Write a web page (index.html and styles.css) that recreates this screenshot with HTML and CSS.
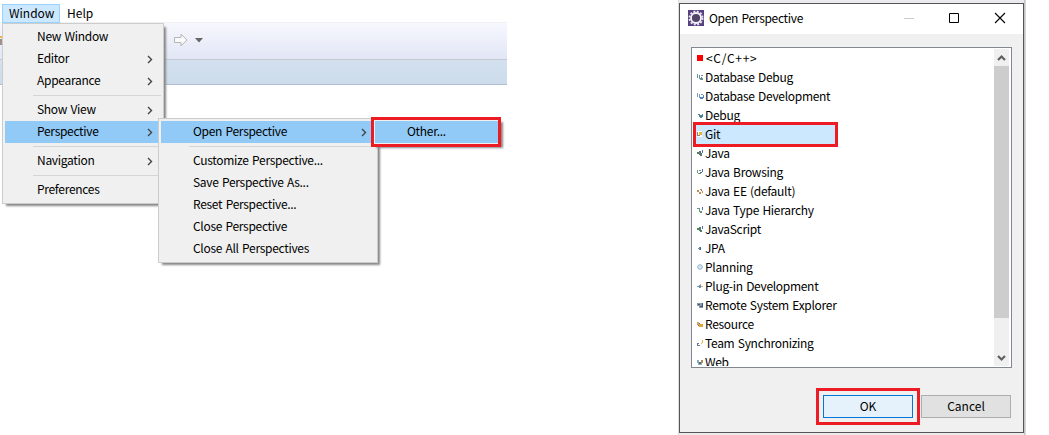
FILE: index.html
```html
<!DOCTYPE html>
<html lang="en">
<head>
<meta charset="utf-8">
<title>Open Perspective</title>
<link rel="stylesheet" href="styles.css">
</head>
<body>
<main class="desktop">
  <section class="ide">
    <nav class="menubar"><span class="menubar-item active">Window</span><span class="menubar-item">Help</span></nav>
    <div class="toolbar">
      <svg class="tool-edge" width="3" height="12" viewBox="0 0 3 12"><path d="M0 1h2v2H0z" fill="#f0b050"/><path d="M0 4h2v6H0z" fill="#a09088"/></svg>
      <svg class="forward" width="32" height="14" viewBox="0 0 32 14"><path d="M1.500 4.500H8V1.200L14 7 8 12.800V9.500H1.500z" fill="#fafafa" stroke="#b4b4b4"/><path d="M22 5h8l-4 4.500z" fill="#666"/></svg>
    </div>
    <div class="tabstrip"></div>
  </section>

  <div class="menu menu-window">
    <div class="item">New Window</div>
    <div class="item">Editor<svg class="chev" viewBox="0 0 6 9"><path d="M1 1l3.500 3.500L1 8"/></svg></div>
    <div class="item">Appearance<svg class="chev" viewBox="0 0 6 9"><path d="M1 1l3.500 3.500L1 8"/></svg></div>
    <hr>
    <div class="item">Show View<svg class="chev" viewBox="0 0 6 9"><path d="M1 1l3.500 3.500L1 8"/></svg></div>
    <div class="item selected">Perspective<svg class="chev" viewBox="0 0 6 9"><path d="M1 1l3.500 3.500L1 8"/></svg></div>
    <hr>
    <div class="item">Navigation<svg class="chev" viewBox="0 0 6 9"><path d="M1 1l3.500 3.500L1 8"/></svg></div>
    <hr>
    <div class="item">Preferences</div>
  </div>
  <div class="menu menu-perspective">
    <div class="item selected">Open Perspective<svg class="chev" viewBox="0 0 6 9"><path d="M1 1l3.500 3.500L1 8"/></svg></div>
    <hr>
    <div class="item">Customize Perspective...</div>
    <div class="item">Save Perspective As...</div>
    <div class="item">Reset Perspective...</div>
    <div class="item">Close Perspective</div>
    <div class="item">Close All Perspectives</div>
  </div>
  <div class="menu menu-other"><div class="item selected">Other...</div></div>

  <div class="backdrop"></div>
  <section class="dialog">
    <header class="titlebar">
      <svg class="logo" width="16" height="16" viewBox="0 0 16 16"><path fill="#56407f" d="M0 0h16v16H0z"/><circle cx="8" cy="8" r="6.500" fill="none" stroke="#e4e0ec" stroke-width="2" stroke-dasharray="2 1.400"/><circle cx="8" cy="8" r="5" fill="#51456a" stroke="#f4f2f8" stroke-width="1.800"/></svg>
      <h1 class="title">Open Perspective</h1>
      <svg class="controls" width="104" height="12" viewBox="0 0 104 12" fill="none"><path d="M1 6.500h10" stroke="#ccc"/><path d="M46.500 1.500h9v9h-9z" stroke="#000"/><path d="M92 1l10 10M102 1L92 11" stroke="#000" stroke-width="1.100"/></svg>
    </header>
    <div class="list">
      <ul class="rows">
        <li class="row first"><svg class="ico" viewBox="0 0 7 7"><path fill="red" d="M0 0h6v6H0z"/></svg>&lt;C/C++&gt;</li>
        <li class="row"><svg class="ico" viewBox="0 0 7 7"><path fill="#6f91ad" d="M0 0h1v4H0zM2 1h1v4H2zM4 1h2v1H4zM3 4h3v2H3z"/><path fill="#4d9a75" d="M4 3h1v3H4z"/></svg>Database Debug</li>
        <li class="row"><svg class="ico" viewBox="0 0 7 7"><path fill="#7b9dc1" d="M0 0h1v4H0zM2 1h1v4H2zM4 1h2v1H4z"/><path fill="#4a86c8" d="M3 4h3v2H3zM6 2h1v3H6z"/></svg>Database Development</li>
        <li class="row"><svg class="ico" viewBox="0 0 7 7"><path fill="#4b8790" d="M1 2h2v1H1zM2 3h4v2H2zM3 5h2v1H3zM5 2h1v1H5z"/></svg>Debug</li>
        <li class="row picked"><svg class="ico" viewBox="0 0 7 7"><path fill="#fff" d="M0 0h5v6H0z"/><path fill="#a87860" d="M0 1h1v4H0zM1 4h2v1H1z"/><path fill="#edb52f" d="M2 1h3v3H2z"/></svg>Git</li>
        <li class="row"><svg class="ico" viewBox="0 0 7 7"><path fill="#597a62" d="M0 2h2v2H0zM2 1h2v4H2zM3 4h2v2H3z"/><path fill="#536caa" d="M5 0h1v3H5zM4 3h1v1H4z"/></svg>Java</li>
        <li class="row"><svg class="ico" viewBox="0 0 7 7"><path fill="#63987a" d="M0 1h1v3H0zM1 4h3v1H1zM2 1h2v1H2z"/><path fill="#536caa" d="M5 0h1v3H5zM3 3h2v1H3z"/></svg>Java Browsing</li>
        <li class="row"><svg class="ico" viewBox="0 0 7 7"><path fill="#c78c4a" d="M0 2h2v2H0zM3 1h2v1H3zM2 4h2v2H2zM5 3h1v2H5z"/><path fill="#7c6295" d="M4 2h1v1H4z"/></svg>Java EE (default)</li>
        <li class="row"><svg class="ico" viewBox="0 0 7 7"><path fill="#63987a" d="M0 1h3v1H0zM2 2h1v3H2zM3 4h2v2H3z"/><path fill="#536caa" d="M5 0h1v3H5z"/></svg>Java Type Hierarchy</li>
        <li class="row"><svg class="ico" viewBox="0 0 7 7"><path fill="#478363" d="M0 2h2v2H0zM2 1h2v4H2zM3 4h2v2H3z"/><path fill="#536caa" d="M5 0h1v3H5z"/><path fill="#b35e4c" d="M1 2h1v1H1z"/></svg>JavaScript</li>
        <li class="row"><svg class="ico" viewBox="0 0 7 7"><path fill="#6994b5" d="M1 3h1v1H1zM2 2h2v3H2z"/><path fill="#3f6888" d="M3 2h1v3H3z"/></svg>JPA</li>
        <li class="row"><svg class="ico" viewBox="0 0 7 7"><circle cx="3" cy="3" r="2.300" fill="#d6e8f2" stroke="#91b2ca"/></svg>Planning</li>
        <li class="row"><svg class="ico" viewBox="0 0 7 7"><path fill="#6c91bf" d="M0 3h2v1H0zM2 2h2v3H2z"/><path fill="#d6ab55" d="M3 1h1v1H3zM4 3h2v1H4z"/></svg>Plug-in Development</li>
        <li class="row"><svg class="ico" viewBox="0 0 7 7"><path fill="#8a9aab" d="M0 1h6v5H2V4H0z"/><path fill="#405779" d="M1 2h2v1H1zM3 4h2v1H3zM5 1h1v4H5z"/></svg>Remote System Explorer</li>
        <li class="row"><svg class="ico" viewBox="0 0 7 7"><path fill="#c9a477" d="M0 1h2v3H0z"/><path fill="#e5a331" d="M2 3h4v3H2z"/><path fill="#75685c" d="M2 2h1v1H2zM1 4h1v1H1z"/></svg>Resource</li>
        <li class="row"><svg class="ico" viewBox="0 0 7 7"><path fill="#647a9d" d="M0 3h1v3H0zM1 5h2v1H1zM1 3h1v1H1z"/><path fill="#e7b736" d="M5 0h1v3H5zM4 3h1v1H4z"/></svg>Team Synchronizing</li>
        <li class="row"><svg class="ico" viewBox="0 0 7 7"><path fill="#8cabc5" d="M0 1h2v3H0zM1 3h4v3H1z"/><path fill="#b58a4f" d="M4 1h2v3H4z"/><path fill="#45766b" d="M2 3h2v2H2z"/></svg>Web</li>
      </ul>
      <div class="scrollbar">
        <svg class="arrow" viewBox="0 0 15 17"><path d="M4 11l3.500-3.500L11 11" fill="none" stroke="#606060" stroke-width="2.200"/></svg>
        <div class="thumb"></div>
        <svg class="arrow" viewBox="0 0 15 17"><path d="M4 7l3.500 3.500L11 7" fill="none" stroke="#606060" stroke-width="2.200"/></svg>
      </div>
    </div>
    <footer class="buttons"><button class="btn ok">OK</button><button class="btn">Cancel</button></footer>
  </section>
  <div class="mark mark-other"></div>
  <div class="mark mark-git"></div>
  <div class="mark mark-ok"></div>
</main>
</body>
</html>
```
FILE: styles.css
```css
* { box-sizing: border-box; }
body { margin: 0; background: #fff; color: #000; font: 12px/22px "Noto Sans CJK KR", "Open Sans", sans-serif; letter-spacing: -0.3px; word-spacing: 1px; }
.desktop { position: relative; width: 1049px; height: 435px; overflow: hidden; }
.ide { width: 507px; }
.menubar { display: flex; height: 22px; padding: 4px 0 0 2px; }
.menubar-item { height: 19px; padding: 0 6px; line-height: 15px; letter-spacing: 0; border: 1px solid transparent; }
.menubar-item.active { width: 58px; background: #cce8ff; border-color: #99d1ff; }
.toolbar { display: flex; align-items: center; height: 38px; background: linear-gradient(#f7f8fe, #e1e5f5); border-bottom: 1px solid #c6c8d0; border-top: 1px solid #f0f0f0; }
.forward { margin: 0 0 2px 170px; }
.tabstrip { height: 25px; background: linear-gradient(#d2e0ef, #cddceb); border-bottom: 1px solid #b2bdd2; }

.menu { position: absolute; padding: 2px; background: #f0f0f0; border: 1px solid #ccc; box-shadow: 3px 3px 2px -1px #888; }
.menu-window { left: 2px; top: 23px; width: 162px; }
.menu-perspective { left: 158px; top: 118px; width: 220px; }
.menu-other { left: 372px; top: 118px; width: 129px; }
.item { display: flex; justify-content: space-between; height: 22px; padding: 0 8px 0 32px; line-height: 20px; white-space: nowrap; }
.item.selected { background: #91c9f7; }
.menu hr { height: 1px; margin: 3px 0 3px 28px; border: 0; background: #d5d5d5; }
.chev { align-self: center; width: 6px; height: 9px; fill: none; stroke: #444; stroke-width: 1.4; }

.backdrop { position: absolute; left: 678px; top: 0; width: 348px; height: 435px; background: linear-gradient(90deg, #dedee0 0 1px, #ebebed 1px 346px, #c4c4c8 346px 347px, #d8d8dc 347px); }
.dialog { position: absolute; left: 679px; top: 3px; width: 345px; height: 430px; background: #f0f0f0; border: 1px solid #555; }
.titlebar { display: flex; align-items: center; height: 30px; padding: 0 16px 2px 8px; background: #fff; }
.title { margin: 0 auto 0 5px; font-size: 12px; font-weight: 400; }
.list { display: flex; justify-content: space-between; width: 321px; height: 321px; margin: 13px 0 0 11px; padding: 1px 2px 1px 1px; background: #fff; border: 1px solid #828790; }
.rows { flex: 1; height: 317px; margin: 0; padding: 0 0 0 2px; overflow: hidden; list-style: none; }
.row { display: flex; width: 141px; height: 19px; padding-left: 2px; line-height: 17px; white-space: nowrap; }
.row.picked { background: #cce8ff; }
.ico { width: 7px; height: 7px; margin: 6px 1px 0 0; flex: none; }
.first .ico { margin-right: 2px; }
.first { letter-spacing: 0.7px; }
.scrollbar { display: flex; flex-direction: column; width: 15px; height: 317px; background: #f0f0f0; }
.arrow { width: 15px; height: 17px; }
.thumb { height: 252px; margin-bottom: auto; background: #cdcdcd; }
.buttons { display: flex; gap: 8px; justify-content: flex-end; padding: 27px 12px 0 0; }
.btn { width: 90px; height: 23px; padding: 0 0 2px; font: inherit; line-height: 19px; background: #e1e1e1; border: 1px solid #adadad; }
.btn.ok { background: #e5f1fb; border-color: #0078d7; }

.mark { position: absolute; border: 3px solid #ed1c24; }
.mark-other { left: 371px; top: 117px; width: 130px; height: 30px; }
.mark-git { left: 693px; top: 122px; width: 145px; height: 25px; }
.mark-ok { left: 816px; top: 388px; width: 104px; height: 37px; }
```
